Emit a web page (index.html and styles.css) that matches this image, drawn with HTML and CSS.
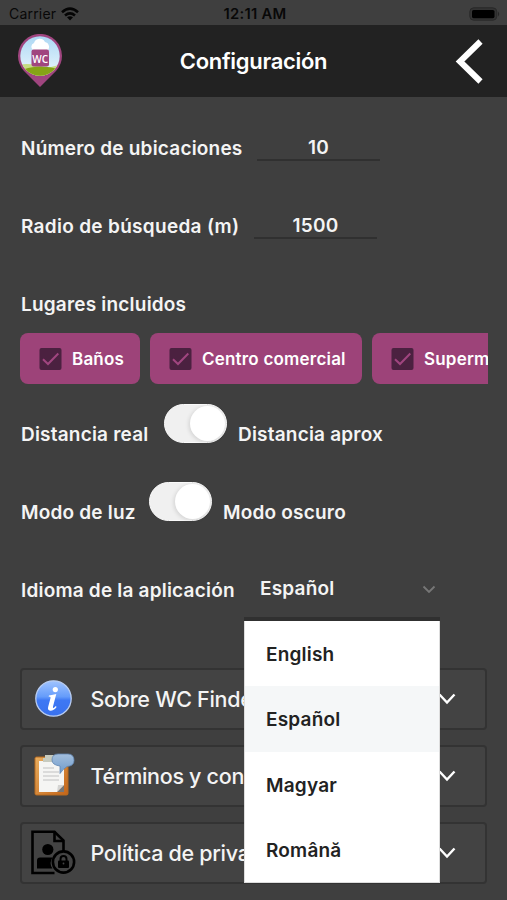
FILE: index.html
```html
<!DOCTYPE html>
<html lang="es">
<head>
<meta charset="utf-8">
<meta name="viewport" content="width=device-width, initial-scale=1">
<title>Configuración</title>
<link rel="stylesheet" href="styles.css">
</head>
<body>
<div class="status">
  <div class="carrier"><span>Carrier</span>
    <svg width="18" height="14" viewBox="0 0 18 14"><g fill="none" stroke="#050505" stroke-width="2.6"><path d="M1 5.2Q9-1.800 17 5.200"/><path d="M4 8.400Q9 4.200 14 8.400"/></g><path d="M6 10.300Q9 8 12 10.300L9 13.600Z" fill="#050505"/></svg>
  </div>
  <time>12:11 AM</time>
  <svg class="battery" width="32" height="14" viewBox="0 0 32 14"><rect x=".8" y=".8" width="27" height="12.4" rx="4" fill="#333" stroke="#292929"/><rect x="3" y="3" width="22.5" height="8.200" rx="1.600" fill="#000"/><path d="M29.200 4.500q2 2.500 0 5z" fill="#222"/></svg>
</div>
<header class="header">
  <svg class="logo" width="46" height="54" viewBox="0 0 46 54">
    <defs><linearGradient id="sky" x2="0" y2="1"><stop stop-color="#a9d6f3"/><stop offset="1" stop-color="#f2faff"/></linearGradient><clipPath id="disc"><circle cx="23" cy="22" r="19.700"/></clipPath></defs>
    <path d="M23 53L7 37A22 22 0 1 1 39 37Z" fill="#a0457f"/>
    <g clip-path="url(#disc)"><path d="M0 0h46v46H0z" fill="url(#sky)"/><path d="M0 31Q14 28 30 34L46 30V46H0Z" fill="#c5dc83"/><ellipse cx="24" cy="41" rx="23" ry="8.500" fill="#86a316"/><path d="M16 16a4 4 0 0 1 1-7a6 6 0 0 1 11-1a5 5 0 0 1 3 8z" fill="#fff"/></g>
    <rect x="14.500" y="15.500" width="17.500" height="17" rx="2" fill="#a0457f"/>
    <text class="logo-text" x="23.200" y="29" text-anchor="middle">WC</text>
  </svg>
  <h1>Configuración</h1>
  <svg class="back" width="28" height="46" viewBox="0 0 28 46"><path d="M25.500 3.500L5 23.500L25.500 43.500" fill="none" stroke="#fff" stroke-width="6"/></svg>
</header>
<main class="main">
  <div class="row"><span class="label l-num">Número de ubicaciones</span><span class="field">10</span></div>
  <div class="row"><span class="label l-rad">Radio de búsqueda (m)</span><span class="field">1500</span></div>
  <h2>Lugares incluidos</h2>
  <div class="chips">
    <div class="chip chip-a"><svg class="check" viewBox="0 0 22 22"><rect width="22" height="22" rx="2"/><path d="M3.500 11.200L8.500 16L18.800 5.500"/></svg><span>Baños</span></div>
    <div class="chip chip-b"><svg class="check" viewBox="0 0 22 22"><rect width="22" height="22" rx="2"/><path d="M3.500 11.200L8.500 16L18.800 5.500"/></svg><span>Centro comercial</span></div>
    <div class="chip chip-c"><svg class="check" viewBox="0 0 22 22"><rect width="22" height="22" rx="2"/><path d="M3.500 11.200L8.500 16L18.800 5.500"/></svg><span>Supermercado</span></div>
  </div>
  <div class="row"><span class="label l-dist">Distancia real</span><i class="toggle"></i><span class="label">Distancia aprox</span></div>
  <div class="row"><span class="label l-mode">Modo de luz</span><i class="toggle"></i><span class="label">Modo oscuro</span></div>
  <div class="row"><span class="label l-lang">Idioma de la aplicación</span>
    <div class="select"><span>Español</span><svg width="14" height="9" viewBox="0 0 14 9"><path d="M1.500 1.500L7 7L12.500 1.500" fill="none" stroke="#777" stroke-width="1.800"/></svg>
      <ul class="menu"><li>English</li><li class="selected">Español</li><li>Magyar</li><li>Română</li></ul>
    </div>
  </div>
  <section class="panels">
    <div class="panel">
      <svg class="icon" width="46" height="50" viewBox="0 0 46 50"><defs><linearGradient id="blue" x2="0" y2="1"><stop stop-color="#a0c4ff"/><stop offset=".45" stop-color="#659cfa"/><stop offset=".55" stop-color="#3e78f4"/><stop offset="1" stop-color="#3971ed"/></linearGradient></defs><circle cx="22.500" cy="24.500" r="17.700" fill="url(#blue)" stroke="#b9cdf1" stroke-width="1.300"/><circle cx="24.300" cy="15.600" r="2.600" fill="#fff"/><path d="M18 21.500q4-.8 7.300-1.500l-3.300 12.500q-.4 2 1 1.200l1.800-1.600l.8.8q-3 4-6.400 3.800q-3-.4-2-4l2.400-9q.2-1.300-2-1.300z" fill="#fff"/></svg>
      <span>Sobre WC Finder</span><svg class="chev" width="18" height="12" viewBox="0 0 18 12"><path d="M1.500 1.500L9 9.500L16.500 1.500"/></svg>
    </div>
    <div class="panel">
      <svg class="icon" width="46" height="50" viewBox="0 0 46 50"><defs><linearGradient id="wood" x2="1" y2="1"><stop stop-color="#e9ae5f"/><stop offset="1" stop-color="#c46417"/></linearGradient><linearGradient id="bubble" x2="0" y2="1"><stop stop-color="#a4bfdd"/><stop offset="1" stop-color="#6e9bcc"/></linearGradient></defs><g transform="translate(0 -1)"><rect x="4" y="7" width="33" height="38" rx="1.500" fill="url(#wood)" stroke="#b66a20"/><path d="M8 11h25v24l-7 7H8z" fill="#f5f5f3"/><path d="M33 35l-7 7h7z" fill="#777"/><path d="M26 42l1-7h6z" fill="#d4d4d2"/><path d="M14 5h9v7H12V8h2z" fill="#c7cbbf"/><path d="M12 18h11M12 22h16M12 26h16M12 30h16" stroke="#c2c2c2" stroke-width="1.200"/><path d="M27 4H37Q43 4 43 10.500Q43 16 36 16.500Q32 19 29 23.500V16Q21 15 21 10Q21 4 27 4Z" fill="url(#bubble)" stroke="#6286b1" stroke-width=".8"/></g></svg>
      <span>Términos y condiciones</span><svg class="chev" width="18" height="12" viewBox="0 0 18 12"><path d="M1.500 1.500L9 9.500L16.500 1.500"/></svg>
    </div>
    <div class="panel">
      <svg class="icon" width="46" height="50" viewBox="0 0 46 50"><g transform="translate(-.5 -.5)"><g fill="none" stroke="#000" stroke-width="2.600"><path d="M24 45.500H2V4.300H24L33 13V25"/><path d="M24 4V13.500H33"/></g><circle cx="17.300" cy="22" r="5.600"/><path d="M6.500 41V33q0-3 3-3H22Q18 36 22 41Z"/><circle cx="33" cy="34.500" r="10.600" fill="#434343" stroke="#000" stroke-width="2.600"/><rect x="27.500" y="33" width="11" height="7.500" rx="1"/><path d="M30 34v-2.500a3 3 0 0 1 6 0V34" fill="none" stroke="#000" stroke-width="2"/><circle cx="33" cy="36" r=".9" fill="#444"/></g></svg>
      <span>Política de privacidad</span><svg class="chev" width="18" height="12" viewBox="0 0 18 12"><path d="M1.500 1.500L9 9.500L16.500 1.500"/></svg>
    </div>
  </section>
</main>
</body>
</html>
```
FILE: styles.css
```css
* { box-sizing: border-box; }
body { margin: 0; height: 900px; overflow: hidden; background: #3f3f3f; color: #f4f4f4; font: 600 19px/24px Inter, "Liberation Sans", sans-serif; letter-spacing: .2px; white-space: nowrap; }
h1, h2, ul { margin: 0; padding: 0; font: inherit; }
svg { display: block; flex: none; }
.status { height: 25px; padding: 2px 6px 0 9px; display: grid; grid-template-columns: 1fr auto 1fr; align-items: center; font-size: 14.5px; color: #080808; }
.status time { font-size: 14.8px; letter-spacing: .25px; }
.carrier { display: flex; gap: 5px; align-items: center; font-weight: 400; font-size: 14px; }
.battery { justify-self: end; }
.header { height: 72px; padding: 0 24px 0 17px; background: #222; display: grid; grid-template-columns: 1fr auto 1fr; align-items: center; color: #fff; }
.header h1 { font-size: 22px; letter-spacing: -.3px; padding-left: 7px; }
.logo-text { font: 600 10px "Open Sans", sans-serif; fill: #fff; letter-spacing: 0; }
.back { justify-self: end; }
.main { padding: 12px 20px 0 21px; }
.row { height: 78px; display: flex; align-items: center; }
.label { padding-top: 2px; }
.field { width: 123px; height: 25px; border-bottom: 2px solid #303030; text-align: center; }
.l-num { width: 236px; }
.l-rad { width: 233px; letter-spacing: .3px; }
.main h2 { height: 68px; padding-top: 28px; }
.chips { display: flex; gap: 10px; height: 51px; margin: 0 -1px 11px; width: 468px; overflow: hidden; }
.chip { flex: none; border-radius: 8px; background: #9d4379; display: flex; align-items: center; padding-left: 19px; gap: 10px; font-size: 17px; color: #fff; }
.chip-a { width: 120px; }
.chip-b { width: 212px; }
.chip-c { width: 200px; }
.check { width: 23px; height: 22px; fill: #4b2140; }
.check path { fill: none; stroke: #a0457f; stroke-width: 2; }
.l-dist { width: 143px; }
.l-mode { width: 128px; }
.toggle { width: 63px; height: 39px; margin: -22px 11px 0 0; padding: 1px; border-radius: 20px; background: #f0f0f0; border: 1px solid #fafafa; display: flex; justify-content: flex-end; }
.toggle::after { content: ""; width: 35px; height: 35px; border-radius: 50%; background: #fff; box-shadow: -1px 1px 4px #0002; }
.l-lang { width: 223px; }
.select { position: relative; width: 196px; height: 60px; border-bottom: 4px solid #303030; display: flex; align-items: center; justify-content: space-between; padding: 0 4px 0 16px; margin-top: 2px; }
.menu { position: absolute; z-index: 2; left: 0; top: 60px; width: 196px; height: 262px; background: #fff; border: 1px solid #ddd; border-top: 0; list-style: none; color: #222; }
.menu li { height: 65.300px; padding: 3px 0 0 21px; display: flex; align-items: center; }
.menu .selected { background: #f5f7f8; }
.panels { margin: 39px 0 0 -1px; display: grid; gap: 15px; }
.panel { height: 62px; border: 2px solid #333; border-radius: 4px; background: #434343; display: flex; align-items: center; padding: 0 29px 0 9px; font-size: 21.5px; font-weight: 500; letter-spacing: -.3px; }
.panel span { flex: 1; margin-left: 13.500px; }
.chev { fill: none; stroke: #fff; stroke-width: 2.400; }
```
